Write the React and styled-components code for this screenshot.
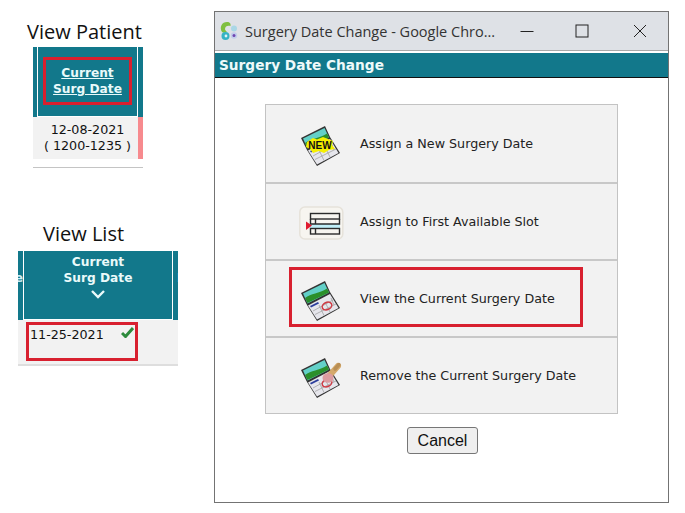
import styled, { createGlobalStyle } from "styled-components";

const GlobalStyle = createGlobalStyle`
	html, body {
		margin: 0;
		padding: 0;
		background: #fff;
	}
	body {
		font-family: "DejaVu Sans", Verdana, sans-serif;
	}
`

const Page = styled.div`
	display: flex;
	align-items: flex-start;
	width: 685px;
	height: 513px;
	overflow: hidden;
	background: #fff;
`

const LeftColumn = styled.div`
	display: flex;
	flex-direction: column;
	width: 214px;
	flex: none;
`

const Section = styled.section`
	display: flex;
	flex-direction: column;
	align-items: flex-start;
	margin-left: ${props => props.$left}px;
	margin-top: ${props => props.$top}px;
	width: ${props => props.$width}px;
`

const Caption = styled.div`
	margin-left: ${props => props.$shift}px;
	margin-bottom: ${props => props.$below}px;
	font-family: "Open Sans", sans-serif;
	font-size: 20px;
	line-height: 26px;
	color: #111;
	white-space: nowrap;
`

const TealHead = styled.div`
	display: flex;
	justify-content: center;
	width: 100%;
	height: ${props => props.$height}px;
	box-sizing: border-box;
	background: #12788b;
	border-left: ${props => props.$side}px solid #12788b;
`

const HeadCell = styled.div`
	flex: 1;
	display: flex;
	flex-direction: column;
	align-items: center;
	border-left: 1px solid #fff;
	border-right: 1px solid #fff;
	border-bottom: 1px solid #fff;
	color: #eafafa;
	font-size: 12.2px;
	font-weight: bold;
	line-height: 16px;
	text-align: center;
`

const HeadEdge = styled.div`
	flex: none;
	display: flex;
	justify-content: ${props => (props.$end ? "flex-end" : "flex-start")};
	width: ${props => props.$width}px;
	box-sizing: border-box;
	padding-top: 19px;
	padding-left: ${props => props.$inset || 0}px;
	color: #cfeef5;
	font-size: 12.2px;
	font-weight: bold;
	line-height: 16px;
	overflow: hidden;
`

const Marked = styled.div`
	border: 3px solid #d8202f;
	margin-top: 10px;
	width: 89px;
	height: 48px;
	box-sizing: border-box;
	display: flex;
	flex-direction: column;
	justify-content: center;
	text-decoration: underline;
	white-space: nowrap;
`

const PatientBody = styled.div`
	display: flex;
	width: 100%;
	height: 42px;
	background: #f2f2f2;
`

const PatientDate = styled.div`
	flex: 1;
	text-align: center;
	font-size: 12.7px;
	line-height: 16px;
	padding: 5px 0 0 5px;
	color: #111;
	white-space: nowrap;
`

const PinkBar = styled.div`
	width: 5px;
	background: #f78a8e;
	margin-left: 1px;
`

const BottomRule = styled.div`
	width: 100%;
	height: 1px;
	background: #c4c4c4;
	margin-top: 8px;
`

const ListHeadLabel = styled.div`
	margin-top: 3px;
`

const Chevron = styled.svg`
	margin-top: 3px;
`

const ListBody = styled.div`
	width: 100%;
	height: 46px;
	box-sizing: border-box;
	background: #f2f2f2;
	border-bottom: 2px solid #dedede;
	padding: 2px 0 0 8px;
`

const DateBox = styled.div`
	position: relative;
	width: 112px;
	height: 39px;
	box-sizing: border-box;
	border: 3px solid #d8202f;
	font-size: 12.7px;
	line-height: 16px;
	padding: 2px 0 0 1px;
	color: #111;
`

const Tick = styled.svg`
	position: absolute;
	top: 1px;
	right: 1px;
`

const Window = styled.div`
	width: 455px;
	height: 492px;
	margin-top: 11px;
	box-sizing: border-box;
	border: 1px solid #737373;
	background: #fff;
	display: flex;
	flex-direction: column;
	align-items: center;
`

const TitleBar = styled.div`
	display: flex;
	align-items: center;
	width: 100%;
	height: 39px;
	flex: none;
	box-sizing: border-box;
	background: #dee1e6;
	border-bottom: 1px solid #a9a9a9;
	padding-left: 4px;
`

const TitleText = styled.div`
	flex: 1;
	margin-left: 6px;
	font-family: "Open Sans", sans-serif;
	font-size: 14.5px;
	color: #333;
	white-space: nowrap;
`

const WindowButton = styled.div`
	width: ${props => props.$width}px;
	height: 100%;
	display: flex;
	align-items: center;
	justify-content: center;
	flex: none;
`

const Banner = styled.div`
	width: 100%;
	height: 25px;
	flex: none;
	margin-top: 2px;
	box-sizing: border-box;
	background: #12788b;
	border-bottom: 1px solid #111;
	padding-left: 4px;
	color: #eefafa;
	font-size: 13.7px;
	font-weight: bold;
	line-height: 25px;
`

const Panel = styled.div`
	width: 353px;
	margin-top: 26px;
	box-sizing: border-box;
	border: 1px solid #c3c3c3;
	background: #f2f2f2;
	display: flex;
	flex-direction: column;
`

const Row = styled.div`
	position: relative;
	display: flex;
	align-items: center;
	height: 77px;
	box-sizing: border-box;
	padding-left: 33px;
	border-top: ${props => (props.$first ? "none" : "2px solid #c8c8c8")};
	font-size: 12.7px;
	color: #222;
	white-space: nowrap;
`

const RowIcon = styled.div`
	width: 46px;
	height: 46px;
	margin-right: 15px;
	flex: none;
`

const Highlight = styled.div`
	position: absolute;
	left: 23px;
	top: 6px;
	width: 294px;
	height: 60px;
	border: 3px solid #d8202f;
	box-sizing: border-box;
`

const CancelButton = styled.button`
	margin-top: 13px;
	margin-left: 2px;
	width: 71px;
	height: 27px;
	box-sizing: border-box;
	border: 1px solid #767676;
	border-radius: 3px;
	background: #efefef;
	font-family: "Liberation Sans", Arial, sans-serif;
	font-size: 16px;
	color: #111;
	padding: 0;
`

const ChromeLogo = () => (
	<svg width="20" height="20" viewBox="0 0 20 20">
		<path d="M3 11 C0 6 3 1 8 1 C11 1 12 3 11.5 5 C9 4 6 5 6 8 C6 9 7 10 8 11 C6 12 4 12 3 11 Z" fill="#7fbf3f" />
		<circle cx="6.5" cy="15" r="4" fill="#36b3c4" />
		<circle cx="7" cy="15" r="1.4" fill="#dff3f5" />
		<circle cx="15" cy="7.5" r="3" fill="#a9d7e6" />
		<circle cx="15" cy="14.5" r="3.2" fill="#c3cdec" />
		<circle cx="15" cy="14.5" r="1.5" fill="#6f46b0" />
	</svg>
)

// the calendar sheet shared by the new, view and remove icons
const CalendarBase = ({ children }) => (
	<svg width="46" height="46" viewBox="0 0 46 46">
		<path d="M2 17 L26 5 L31 16 L41 32 L18 45 L8 29 Z" fill="#333" />
		<path d="M4 17.5 L25.5 7 L30 16.5 L8.5 27.5 Z" fill="#63d0c8" />
		<path d="M6 22 C12 17 20 18 28 12.5 L30 16.5 L8.5 27 Z" fill="#2b8f2b" />
		<path d="M9 29.5 L31 18 L39.5 32 L18 43.5 Z" fill="#e6e6ec" />
		<path d="M11 30 L19 26 L20 27.5 L12 31.5 Z" fill="#2b3d9b" />
		<path d="M14 35 L34 24 M16 38.5 L37 28 M20 29 L25 39.5 M26 26 L31 36 M32 22 L35 29" stroke="#9a9a9a" strokeWidth="0.7" />
		{children}
	</svg>
)

const NewIcon = () => (
	<CalendarBase>
		<path d="M8 21 L11 19 L14 17 L18 18.5 L24 16 L29 18 L34 20 L33 24 L36 28 L30 29 L25 32 L20 30 L14 32 L11 28 L7 26 Z" fill="#f6f000" />
		<text x="21" y="28" textAnchor="middle" fontFamily="Liberation Sans, sans-serif" fontSize="10" fontWeight="bold" fill="#111">NEW</text>
	</CalendarBase>
)

const ViewIcon = () => (
	<CalendarBase>
		<ellipse cx="28" cy="30" rx="5" ry="3.6" transform="rotate(-25 28 30)" fill="none" stroke="#cf3b45" strokeWidth="1.5" />
	</CalendarBase>
)

const RemoveIcon = () => (
	<CalendarBase>
		<ellipse cx="28" cy="30" rx="5" ry="3.6" transform="rotate(-25 28 30)" fill="none" stroke="#cf3b45" strokeWidth="1.5" />
		<path d="M31 22 L39 13" stroke="#d5a96b" strokeWidth="6" strokeLinecap="round" />
		<path d="M36 16 L40 11.5" stroke="#b98f55" strokeWidth="3.5" strokeLinecap="round" />
		<ellipse cx="29" cy="25" rx="5.5" ry="4.8" fill="#dc9ba0" />
	</CalendarBase>
)

const SlotIcon = () => (
	<svg width="46" height="46" viewBox="0 0 46 46">
		<rect x="0.8" y="8" width="43" height="32" rx="5" fill="#f7f5f0" stroke="#e6e2da" strokeWidth="1.5" />
		<rect x="11" y="25" width="30" height="4" fill="#bfeef6" />
		<g fill="none" stroke="#2b2b2b" strokeWidth="1.4">
			<rect x="11.5" y="14.5" width="29" height="5.5" />
			<path d="M11.5 20 V25 H40.5 V20 M16.5 20 V25" />
			<rect x="11.5" y="29.5" width="29" height="5.5" />
			<path d="M16.5 29.5 V35" />
		</g>
		<path d="M7 22.5 L13 26.5 L7 31 Z" fill="#e01b2f" />
	</svg>
)

const App = () => {
	return (
		<Page>
			<GlobalStyle />
			<LeftColumn>
				<Section $left={33} $top={19} $width={110}>
					<Caption $shift={-6} $below={2}>View Patient</Caption>
					<TealHead $height={70} $side={4}>
						<HeadCell>
							<Marked>
								<div>Current</div>
								<div>Surg Date</div>
							</Marked>
						</HeadCell>
						<HeadEdge $width={5} />
					</TealHead>
					<PatientBody>
						<PatientDate>
							<div>12-08-2021</div>
							<div>( 1200-1235 )</div>
						</PatientDate>
						<PinkBar />
					</PatientBody>
					<BottomRule />
				</Section>
				<Section $left={18} $top={53} $width={160}>
					<Caption $shift={25} $below={4}>View List</Caption>
					<TealHead $height={69} $side={0}>
						<HeadEdge $width={5} $end>e</HeadEdge>
						<HeadCell>
							<ListHeadLabel>Current</ListHeadLabel>
							<div>Surg Date</div>
							<Chevron width="16" height="10" viewBox="0 0 16 10">
								<path d="M2 2 L8 8 L14 2" fill="none" stroke="#eafafa" strokeWidth="2.4" />
							</Chevron>
						</HeadCell>
						<HeadEdge $width={5} $inset={4}>D</HeadEdge>
					</TealHead>
					<ListBody>
						<DateBox>
							11-25-2021
							<Tick width="13" height="12" viewBox="0 0 13 12">
								<path d="M1 7 L4.5 10.5 L12 2" fill="none" stroke="#2e8b3d" strokeWidth="3" />
							</Tick>
						</DateBox>
					</ListBody>
				</Section>
			</LeftColumn>
			<Window>
				<TitleBar>
					<ChromeLogo />
					<TitleText>Surgery Date Change - Google Chro...</TitleText>
					<WindowButton $width={50}>
						<svg width="14" height="14" viewBox="0 0 14 14"><path d="M0.5 7.5 H13.5" stroke="#222" /></svg>
					</WindowButton>
					<WindowButton $width={60}>
						<svg width="14" height="14" viewBox="0 0 14 14"><rect x="1" y="1" width="12" height="12" fill="none" stroke="#222" /></svg>
					</WindowButton>
					<WindowButton $width={56}>
						<svg width="14" height="14" viewBox="0 0 14 14"><path d="M1 1 L13 13 M13 1 L1 13" stroke="#222" /></svg>
					</WindowButton>
				</TitleBar>
				<Banner>Surgery Date Change</Banner>
				<Panel>
					<Row $first><RowIcon><NewIcon /></RowIcon>Assign a New Surgery Date</Row>
					<Row><RowIcon><SlotIcon /></RowIcon>Assign to First Available Slot</Row>
					<Row>
						<RowIcon><ViewIcon /></RowIcon>View the Current Surgery Date
						<Highlight />
					</Row>
					<Row><RowIcon><RemoveIcon /></RowIcon>Remove the Current Surgery Date</Row>
				</Panel>
				<CancelButton>Cancel</CancelButton>
			</Window>
		</Page>
	)
}

export default App;
